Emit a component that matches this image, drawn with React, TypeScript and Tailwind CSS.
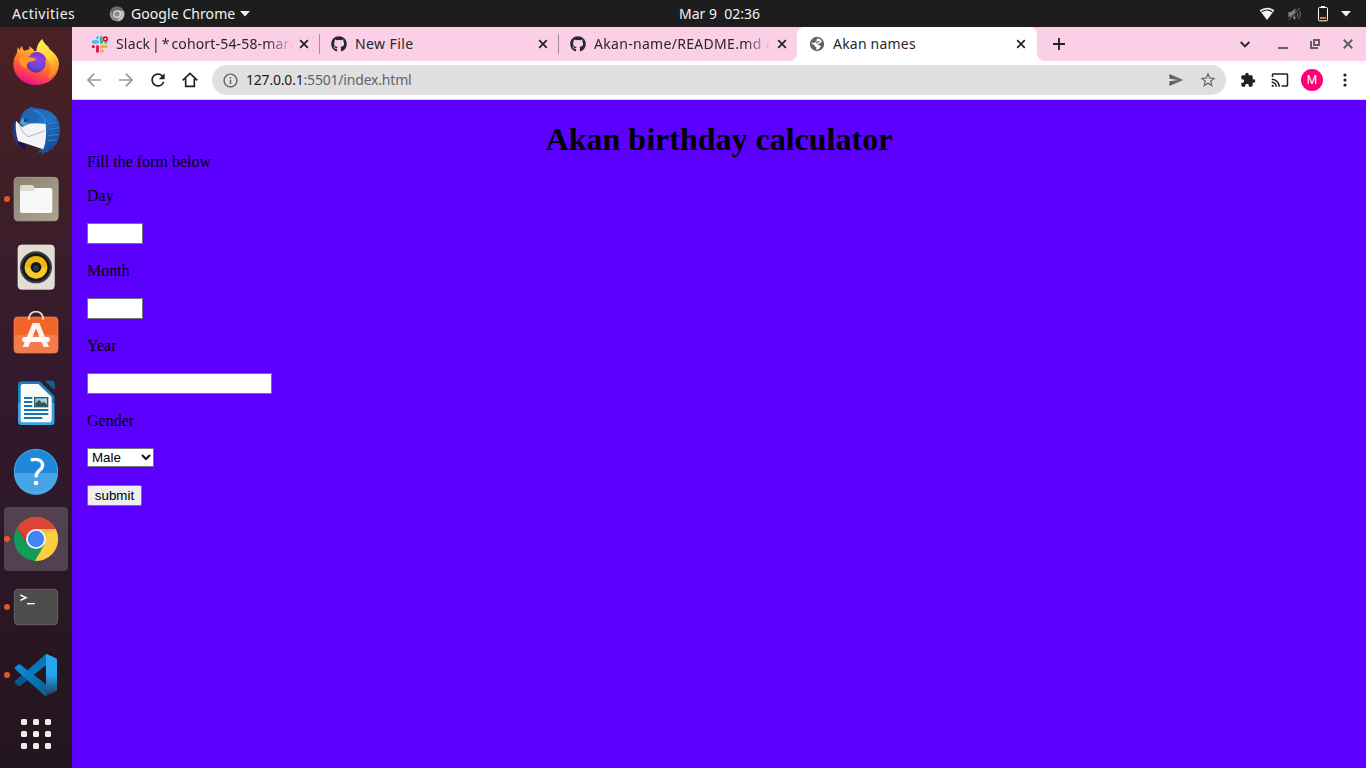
import React from "react";
import type { ReactNode } from "react";
import { FaGithub } from "react-icons/fa";
import { MdCast, MdExtension, MdOutlineInfo, MdRefresh, MdSend, MdStarBorder } from "react-icons/md";

function Firefox() {
  return (
    <svg width="48" height="48" viewBox="36 36 144 144">
      <defs>
        <linearGradient id="ffBody" x1="0.8" y1="0" x2="0.35" y2="1">
          <stop offset="0" stopColor="#fff14d" />
          <stop offset="0.25" stopColor="#ffb52f" />
          <stop offset="0.5" stopColor="#ff7b2a" />
          <stop offset="0.78" stopColor="#ff3b52" />
          <stop offset="1" stopColor="#e2118a" />
        </linearGradient>
        <radialGradient id="ffCore" cx="0.6" cy="0.3" r="0.8">
          <stop offset="0" stopColor="#a03df0" />
          <stop offset="0.6" stopColor="#6a45d6" />
          <stop offset="1" stopColor="#4b2fa3" />
        </radialGradient>
        <linearGradient id="ffFlame" x1="0" y1="0" x2="0.4" y2="1">
          <stop offset="0" stopColor="#fff44f" />
          <stop offset="0.6" stopColor="#ffd43a" />
          <stop offset="1" stopColor="#ff8a2a" />
        </linearGradient>
      </defs>
      <path d="M66 57Q67 68 73 71L88 67Q90 60 86 56Q99 64 104 73L140 70Q175 82 177 108C177 146 148 174 108 174C68 174 39 144 40 108Q41 91 51 78Q51 66 54 61Q57 66 59 70Q61 61 66 57Z" fill="url(#ffBody)" />
      <path d="M108 77Q111 47 127 36Q131 49 145 59Q149 68 152 69Q176 88 175 110Q171 142 143 154Q158 130 149 105Q137 83 108 77Z" fill="url(#ffFlame)" />
      <circle cx="108" cy="108" r="29" fill="url(#ffCore)" />
      <path d="M90 82Q110 69 124 79Q140 88 137 102Q128 88 108 87Z" fill="#8734dc" />
      <path d="M56 93Q70 87 84 91Q103 90 108 96Q106 104 88 104Q75 115 81 125Q58 118 56 93Z" fill="#ff9a24" />
    </svg>
  );
}

function Thunderbird() {
  return (
    <svg width="48" height="48" viewBox="36 240 144 144">
      <defs>
        <linearGradient id="tb" x1="0" y1="0" x2="0.6" y2="1">
          <stop offset="0" stopColor="#1d5fa8" />
          <stop offset="0.5" stopColor="#2173c5" />
          <stop offset="1" stopColor="#1c4b97" />
        </linearGradient>
      </defs>
      <path d="M43 276Q35 300 38 318Q43 356 77 369L72 354L52 340Z" fill="#1d3a80" />
      <path d="M52 341L74 348L79 369Q56 362 52 341Z" fill="#20104f" />
      <path d="M60 283Q63 252 88 242Q97 237 102 243Q148 244 168 269Q183 294 179 317Q177 349 160 359L158 367L150 367L143 377L138 374L126 384L125 376L112 377Q133 358 139 330L135 294Z" fill="url(#tb)" />
      <path d="M48 281L66 300L74 292L90 288L137 290Q142 335 130 367L54 342Q44 306 48 281Z" fill="#f4f4f6" />
      <path d="M57 297Q72 322 84 329Q110 322 137 310" fill="none" stroke="#9a9a9e" strokeWidth="2" />
      <path d="M59 290Q61 265 80 258Q102 254 116 280Q112 290 98 289Q80 290 69 301Q68 292 59 290Z" fill="#1f66b0" />
      <path d="M59 290Q62 276 70 272Q76 286 86 288Q76 291 69 301Q68 292 59 290Z" fill="#4aa0d8" />
      <path d="M100 250Q134 256 136 290" fill="none" stroke="#2c84d0" strokeWidth="5" />
      <path d="M145 290L170 286M146 308L176 302M145 326L176 322M143 342L170 338" fill="none" stroke="#2f8ad2" strokeWidth="3" />
      <circle cx="76" cy="281" r="4" fill="#122a4c" />
    </svg>
  );
}

function Files() {
  return (
    <svg width="48" height="48" viewBox="36 444 144 144">
      <defs>
        <linearGradient id="fl" x1="0" y1="0" x2="1" y2="1">
          <stop offset="0" stopColor="#89836f" />
          <stop offset="1" stopColor="#aba592" />
        </linearGradient>
      </defs>
      <rect x="42.500" y="451" width="132" height="130.500" rx="12" fill="url(#fl)" stroke="#b9b3a1" strokeWidth="2" />
      <path d="M60 485V479Q60 474 66 474H95Q99 474 101 478L105 484V496H60Z" fill="#dedbd3" />
      <path d="M60 492H100L106 483H151Q157 483 157 489V552Q157 558 151 558H66Q60 558 60 552Z" fill="#f8f8f7" />
    </svg>
  );
}

function Rhythmbox() {
  return (
    <svg width="48" height="48" viewBox="36 48 144 144">
      <rect x="54" y="54" width="109" height="133" rx="11" fill="#e2ded4" stroke="#f0ede4" strokeWidth="2" />
      <circle cx="108" cy="121" r="48" fill="#3b3b43" />
      <circle cx="108" cy="121" r="42" fill="#17171c" />
      <circle cx="108" cy="121" r="34" fill="#edb90c" />
      <path d="M74 121A34 34 0 0 0 142 121Z" fill="#ffda3d" opacity=".5" />
      <circle cx="108" cy="121" r="16" fill="#15151c" />
      <circle cx="108" cy="123" r="9" fill="#32323c" />
    </svg>
  );
}

function Software() {
  return (
    <svg width="48" height="48" viewBox="36 252 144 144">
      <rect x="42" y="270" width="132" height="108" rx="11" fill="#f16529" stroke="#fa8258" strokeWidth="2" />
      <path d="M42 324H174V367Q174 378 163 378H53Q42 378 42 367Z" fill="#f47c48" />
      <path d="M87 278V270Q92 254 108 254Q124 254 129 270V278" fill="none" stroke="#f3dfb6" strokeWidth="5" />
      <path fillRule="evenodd" d="M98 288H118L147 360H131L123 340H93L85 360H68ZM108 304L98 330H118Z" fill="#fff4ed" />
      <rect x="66" y="330" width="84" height="15" rx="7" fill="#fff" />
    </svg>
  );
}

function Writer() {
  return (
    <svg width="48" height="48" viewBox="36 456 144 144">
      <path d="M66 463H119L163 507V584Q163 594 152 594H65Q54 594 54 583V474Q54 463 66 463Z" fill="#1383bb" />
      <path d="M54 528H163V584Q163 594 152 594H65Q54 594 54 583Z" fill="#3aa3d7" />
      <path d="M134 461H157Q164 461 164 469V490Z" fill="#0c6496" />
      <path d="M69 471H115L155 510V578Q155 586 147 586H70Q62 586 62 578V479Q62 471 69 471Z" fill="#fafafa" />
      <path d="M72 513H97M72 525H97M72 537H97M72 549H145M72 561H145M72 573H127" stroke="#1477ad" strokeWidth="6" />
      <rect x="102" y="510" width="43" height="31" fill="#285d78" />
      <rect x="106" y="514" width="35" height="23" fill="#8fd0ef" />
      <path d="M106 537V530L117 518L126 528L132 524L141 533V537Z" fill="#454c4b" />
      <circle cx="134" cy="519" r="4" fill="#f5cf62" />
    </svg>
  );
}

function Help() {
  return (
    <svg width="48" height="48" viewBox="36 60 144 144">
      <circle cx="108" cy="132" r="66" fill="#2088d9" />
      <path d="M42 138A66 66 0 0 0 174 138Z" fill="#46a4e4" />
      <circle cx="108" cy="132" r="65" fill="none" stroke="#63b5ee" strokeWidth="2" />
      <path d="M92 99Q110 94 121 101Q133 111 124 125Q108 136 108 151" fill="none" stroke="#fff" strokeWidth="10" />
      <circle cx="108" cy="168" r="7" fill="#fff" />
    </svg>
  );
}

function ChromeLogo() {
  return (
    <svg width="48" height="48" viewBox="36 264 144 144">
      <circle cx="108" cy="336" r="66" fill="#149b58" />
      <path d="M51 303A66 66 0 0 1 168 306H108L82 350Z" fill="#db4437" />
      <path d="M108 306H167A66 66 0 0 1 105 402L134 352Z" fill="#ffcd40" />
      <path d="M108 306H167L168 310L134 319Z" fill="#e0ae35" opacity=".5" />
      <path d="M51 303L78 348L80 329Z" fill="#b53730" opacity=".6" />
      <circle cx="108" cy="336" r="30" fill="#f4f4f4" />
      <circle cx="108" cy="336" r="24.500" fill="#4285f4" />
    </svg>
  );
}

function Terminal() {
  return (
    <svg width="48" height="48" viewBox="36 39 144 144">
      <rect x="43" y="58" width="130" height="106" rx="11" fill="#4c4c4c" stroke="#6c6c6c" strokeWidth="2.500" />
      <path d="M61 75L78 83L61 91" fill="none" stroke="#fff" strokeWidth="4.500" />
      <path d="M81 101H104" stroke="#fff" strokeWidth="4" />
    </svg>
  );
}

function Code() {
  return (
    <svg width="48" height="48" viewBox="36 243 144 144">
      <defs>
        <linearGradient id="vsRight" x1="0" y1="0" x2="0" y2="1">
          <stop offset="0" stopColor="#29a9f2" />
          <stop offset="0.5" stopColor="#26a3ee" />
          <stop offset="1" stopColor="#1b3d5c" />
        </linearGradient>
        <linearGradient id="vsDown" x1="0" y1="0" x2="1" y2="1">
          <stop offset="0" stopColor="#0a93de" />
          <stop offset="1" stopColor="#085c96" />
        </linearGradient>
      </defs>
      <path d="M45 334L138 252V286L60 347Q56 350 52 345L46 339Q43 336 45 334Z" fill="#0877ba" />
      <path d="M45 334L80 303L96 319L60 347Q56 350 52 345L46 339Q43 336 45 334Z" fill="#0a568b" />
      <path d="M46 291L54 284Q57 281 61 284L138 343V378Q133 378 129 373L46 298Q43 295 46 291Z" fill="url(#vsDown)" />
      <path d="M138 251L168 265Q171 267 171 270V359Q171 362 168 364L138 378Z" fill="url(#vsRight)" />
    </svg>
  );
}

const dock: { name: string; icon: ReactNode; running?: boolean; focused?: boolean }[] = [
  { name: "firefox", icon: <Firefox /> },
  { name: "thunderbird", icon: <Thunderbird /> },
  { name: "files", icon: <Files />, running: true },
  { name: "rhythmbox", icon: <Rhythmbox /> },
  { name: "software", icon: <Software /> },
  { name: "writer", icon: <Writer /> },
  { name: "help", icon: <Help /> },
  { name: "chrome", icon: <ChromeLogo />, running: true, focused: true },
  { name: "terminal", icon: <Terminal />, running: true },
  { name: "code", icon: <Code />, running: true },
];

function Dock() {
  return (
    <aside className="flex w-[72px] shrink-0 flex-col items-center bg-linear-to-b from-[#4a2123] via-[#32192e] to-[#23151d] pt-0.5">
      {dock.map((app) => (
        <div key={app.name} className="flex h-[68px] w-16 items-center">
          <div className={`relative flex h-16 w-16 items-center justify-center rounded ${app.focused ? "bg-[#52414f]" : ""}`}>
            {app.running && <span className="absolute top-[29px] left-0 h-1.5 w-1.5 rounded-full bg-[#e95420]" />}
            {app.icon}
          </div>
        </div>
      ))}
      <div className="mt-[10px] grid grid-cols-3 gap-1.5">
        {Array.from({ length: 9 }, (_, i) => (
          <span key={i} className="h-1.5 w-1.5 rounded-[1.5px] bg-[#f0efec]" />
        ))}
      </div>
    </aside>
  );
}

function TopBar() {
  return (
    <header className="grid h-[27px] shrink-0 grid-cols-[679px_82px_1fr] items-center bg-[#1d1d1d] text-[14px] leading-[27px] text-[#f2f2f2]">
      <div className="flex items-center pl-3">
        <span className="w-[97px] tracking-[0.035em]">Activities</span>
        <svg width="16" height="16" viewBox="0 0 48 48" className="mr-1.5">
          <circle cx="24" cy="24" r="22" fill="#8d8d8d" />
          <path d="M4 14A22 22 0 0 1 44 14H24L14 30Z" fill="#6b6b6b" />
          <path d="M24 14H44A22 22 0 0 1 24 46L34 29Z" fill="#bdbdbd" />
          <circle cx="24" cy="24" r="11" fill="#ededed" />
          <circle cx="24" cy="24" r="8" fill="#8a8a8a" />
        </svg>
        <span className="w-[108px] tracking-[0.005em]">Google Chrome</span>
        <svg width="12" height="6" viewBox="0 0 12 6"><path d="M1 0H11L6 5.500Z" fill="#f2f2f2" /></svg>
      </div>
      <span className="whitespace-pre">Mar 9  02:36</span>
      <div className="flex items-center justify-end pr-[14px]">
        <svg width="16" height="14" viewBox="0 0 48 42" className="mr-3">
          <path d="M2 10Q24 -6 46 10L24 39Z" fill="#f4f4f4" />
          <path d="M8 14Q24 4 40 14" fill="none" stroke="#1d1d1d" strokeWidth="3.500" />
        </svg>
        <svg width="16" height="16" viewBox="0 0 48 48" className="mr-[15px]">
          <path d="M4 18H12L25 7V42L12 32H4Z" fill="#818181" />
          <path d="M30 17Q36 24 30 33M34 10Q46 24 34 40" fill="none" stroke="#777" strokeWidth="3" />
          <path d="M6 42L42 5" stroke="#1d1d1d" strokeWidth="6" />
          <path d="M4 43L38 6" stroke="#858585" strokeWidth="2.500" />
        </svg>
        <svg width="10" height="16" viewBox="0 0 30 48" className="mr-3">
          <path d="M9 0H21V5H9Z" fill="#fff" />
          <rect x="1.500" y="4.500" width="27" height="40" rx="3" fill="none" stroke="#fff" strokeWidth="3" />
          <rect x="6" y="33" width="18" height="6" fill="#ef7132" />
        </svg>
        <svg width="12" height="6" viewBox="0 0 12 6"><path d="M1 0H11L6 5.500Z" fill="#f2f2f2" /></svg>
      </div>
    </header>
  );
}

function SlackIcon() {
  return (
    <svg width="17" height="17" viewBox="274 106 51 51" className="-ml-px shrink-0">
      <rect x="289" y="107" width="9" height="9" rx="4.500" fill="#36c5f0" />
      <rect x="276" y="119" width="22" height="10" rx="5" fill="#36c5f0" />
      <rect x="301" y="107" width="9" height="22" rx="4" fill="#2eb67d" />
      <rect x="314" y="120" width="9" height="9" rx="4" fill="#2eb67d" />
      <rect x="276" y="133" width="10" height="10" rx="5" fill="#e01e5a" />
      <rect x="289" y="133" width="9" height="23" rx="4.500" fill="#e9185b" />
      <rect x="302" y="133" width="22" height="10" rx="5" fill="#ecb22e" />
      <rect x="302" y="146" width="10" height="10" rx="4.500" fill="#ecb22e" />
      <circle cx="317" cy="115" r="9.500" fill="#fbcfe6" />
      <circle cx="317" cy="115" r="8" fill="#e8022c" />
      <circle cx="317" cy="115" r="3" fill="#fff" />
    </svg>
  );
}

function GlobeIcon() {
  return (
    <svg width="16" height="16" viewBox="0 0 48 48" className="shrink-0">
      <circle cx="24" cy="24" r="21.500" fill="#5f6368" />
      <path d="M26 7Q35 9 39 16Q38 20 33 20Q31 25 27 23Q24 25 29 27Q36 27 35 32Q34 36 29 38Q28 42 22 41Q21 37 23 35Q17 32 16 27Q10 26 7 22Q8 19 16 21Q19 20 19 17Q24 16 23 12Q24 8 26 7Z" fill="#fff" />
      <path d="M22 17L33 14L30 18L24 22Q19 23 22 17Z" fill="#5f6368" />
    </svg>
  );
}

function Cross() {
  return (
    <svg width="10" height="10" viewBox="0 0 10 10" className="shrink-0">
      <path d="M1.200 1.200L8.800 8.800M8.800 1.200L1.200 8.800" stroke="#202124" strokeWidth="1.700" />
    </svg>
  );
}

function Tab({ icon, title, divider, fade, fit }: { icon: ReactNode; title: string; divider?: boolean; fade?: boolean; fit: string }) {
  return (
    <div className="flex h-[34px] w-[239px] items-center">
      <span className={`h-5 w-px ${divider ? "bg-[#a78c9a]" : ""}`} />
      <span className="ml-[11px] flex w-6 shrink-0">{icon}</span>
      <span className={`w-[177px] overflow-hidden whitespace-nowrap text-[14px] leading-5 text-[#26272b] ${fit} ${fade ? "mask-r-from-85% mask-r-to-100%" : ""}`}>{title}</span>
      <span className="ml-1.5"><Cross /></span>
    </div>
  );
}

function TabStrip() {
  const github = <FaGithub size={16} color="#24292f" />;
  return (
    <div className="flex h-[34px] shrink-0 bg-white">
      <div className="flex w-[725px] shrink-0 rounded-br-lg bg-[#fbcfe6] pl-2">
        <Tab icon={<SlackIcon />} title="Slack | * cohort-54-58-mari" fade fit="tracking-[0.012em] [word-spacing:-2px]" />
        <Tab icon={github} title="New File" divider fit="tracking-[0.03em]" />
        <Tab icon={github} title="Akan-name/README.md a" divider fade fit="tracking-[0.022em]" />
      </div>
      <div className="w-60 shrink-0 bg-[#fbcfe6]">
        <div className="rounded-t-lg bg-white">
          <Tab icon={<GlobeIcon />} title="Akan names" fit="tracking-[0.015em]" />
        </div>
      </div>
      <div className="flex flex-1 items-center rounded-bl-lg bg-[#fbcfe6] pr-3 pl-4">
        <svg width="12" height="12" viewBox="0 0 12 12"><path d="M6 0V12M0 6H12" stroke="#202124" strokeWidth="1.800" /></svg>
        <span className="flex-1" />
        <svg width="10" height="7" viewBox="0 0 10 7" className="mr-[28px]"><path d="M.7 1L5 5.300L9.300 1" fill="none" stroke="#2b2529" strokeWidth="1.900" /></svg>
        <svg width="10" height="10" viewBox="0 0 10 10" className="mr-[22px]"><path d="M0 9H10" stroke="#5f6368" strokeWidth="2" /></svg>
        <svg width="10" height="10" viewBox="0 0 10 10" className="mr-[23px]">
          <path d="M4 1H9V6H4ZM1 2V9H8" fill="none" stroke="#5f6368" strokeWidth="2" />
        </svg>
        <svg width="10" height="10" viewBox="0 0 10 10" className="mr-px"><path d="M.8 .8L9.200 9.200M9.200 .8L.8 9.200" stroke="#5f6368" strokeWidth="2" /></svg>
      </div>
    </div>
  );
}

function Slot({ children }: { children: ReactNode }) {
  return <span className="flex w-8 shrink-0 items-center justify-center">{children}</span>;
}

function Toolbar() {
  return (
    <div className="flex h-[39px] shrink-0 items-center border-b border-[#d9d9df] bg-white px-1.5 text-[#202124]">
      <Slot><svg width="14" height="14" viewBox="0 0 14 14"><path d="M14 7H1.500M7.200 .7L1 7L7.200 13.300" fill="none" stroke="#9b9b9d" strokeWidth="1.700" /></svg></Slot>
      <Slot><svg width="14" height="14" viewBox="0 0 14 14"><path d="M0 7H12.500M6.800 .7L13 7L6.800 13.300" fill="none" stroke="#9b9b9d" strokeWidth="1.700" /></svg></Slot>
      <Slot><MdRefresh size={20} /></Slot>
      <Slot>
        <svg width="16" height="16" viewBox="0 0 48 48"><path d="M2 25L24 4L46 25M11 20V43H37V20" fill="none" stroke="#202124" strokeWidth="5" /></svg>
      </Slot>
      <div className="mx-1.5 flex h-[30px] flex-1 items-center rounded-full bg-[#e0e0e0] pr-0.5">
        <span className="flex w-[34px] justify-center pl-0.5"><MdOutlineInfo size={17} color="#5f6368" /></span>
        <span className="flex-1 text-[14px] leading-5 tracking-[-0.014em] text-[#5f6368]"><span className="text-[#202124]">127.0.0.1</span>:5501/index.html</span>
        <Slot><MdSend size={16} color="#5f6368" /></Slot>
        <Slot><MdStarBorder size={18} color="#5f6368" /></Slot>
      </div>
      <Slot><MdExtension size={16} /></Slot>
      <Slot><MdCast size={18} /></Slot>
      <Slot><span className="flex h-[22px] w-[22px] items-center justify-center rounded-full bg-[#fc0079] font-[Roboto] text-[12px] text-white">M</span></Slot>
      <Slot>
        <svg width="4" height="14" viewBox="0 0 4 14" fill="#202124" className="ml-px"><circle cx="2" cy="2" r="1.600" /><circle cx="2" cy="7" r="1.600" /><circle cx="2" cy="12" r="1.600" /></svg>
      </Slot>
    </div>
  );
}

function Field({ label, children }: { label: string; children: ReactNode }) {
  return (
    <label className="mb-[18px] flex flex-col items-start">
      <span className="mb-[18px] leading-[18px]">{label}</span>
      {children}
    </label>
  );
}

function Page() {
  const box = "block h-[21px] border border-[#767676] bg-white px-1 text-[13px] outline-none";
  return (
    <main className="flex-1 bg-[#5b00ff] pl-[15px] font-['Liberation_Serif',serif] text-[16px] text-black">
      <h1 className="-ml-[15px] h-[53px] pt-[21px] text-center text-[32px] leading-[37px] font-bold">Akan birthday calculator</h1>
      <p className="mb-4 leading-[18px]">Fill the form below</p>
      <form>
        <Field label="Day"><input className={`${box} w-14`} /></Field>
        <Field label="Month"><input className={`${box} w-14`} /></Field>
        <Field label="Year"><input className={`${box} w-[185px]`} /></Field>
        <Field label="Gender">
          <span className="relative flex">
            <select className="h-[19px] w-[67px] appearance-none rounded-[1px] border border-[#767676] bg-white pl-1 font-['Liberation_Sans',sans-serif] text-[13.333px] leading-[15px]">
              <option>Male</option>
              <option>Female</option>
            </select>
            <svg width="10" height="7" viewBox="0 0 10 7" className="pointer-events-none absolute top-1.5 right-[3px]"><path d="M1 1L5 5L9 1" fill="none" stroke="#101010" strokeWidth="2" /></svg>
          </span>
        </Field>
        <button type="button" className="block h-[21px] w-[55px] rounded-[2px] border border-[#767676] bg-[#efefef] font-['Liberation_Sans',sans-serif] text-[13.333px] leading-[15px]">submit</button>
      </form>
    </main>
  );
}

export default function App() {
  return (
    <div className="flex h-[768px] w-[1366px] flex-col overflow-hidden font-['Noto_Sans',sans-serif]">
      <TopBar />
      <div className="flex min-h-0 flex-1">
        <Dock />
        <div className="flex min-w-0 flex-1 flex-col">
          <TabStrip />
          <Toolbar />
          <Page />
        </div>
      </div>
    </div>
  );
}
